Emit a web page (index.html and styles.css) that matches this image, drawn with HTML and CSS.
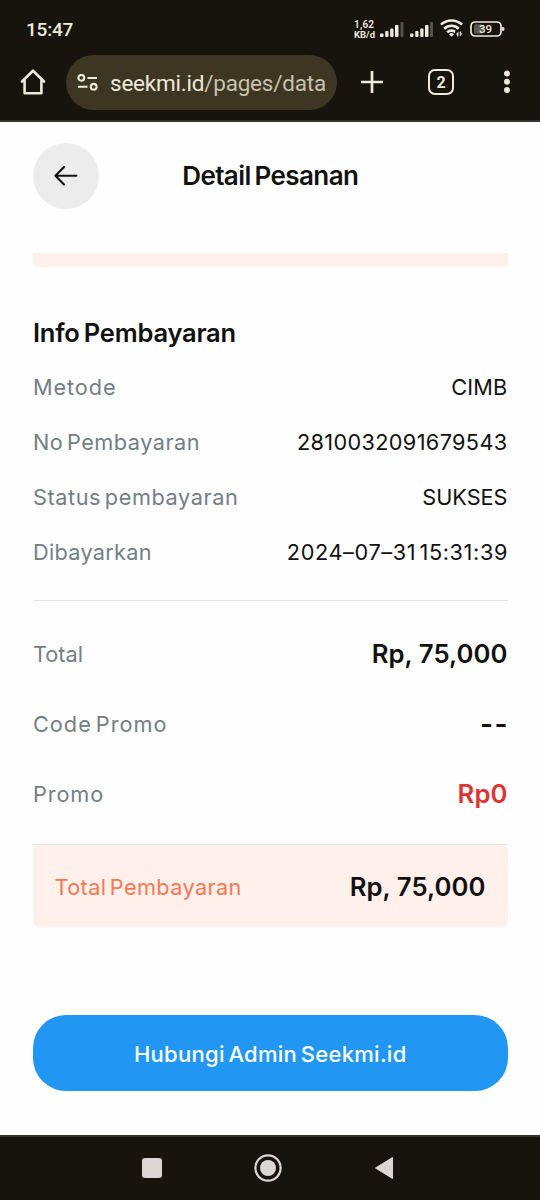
FILE: index.html
```html
<!DOCTYPE html>
<html lang="id">
<head>
<meta charset="utf-8">
<title>Detail Pesanan</title>
<link rel="stylesheet" href="styles.css">
</head>
<body>
<div class="screen">
  <header class="chrome">
    <div class="status">
      <span class="clock">15:47</span>
      <div class="indicators">
        <span class="speed"><span class="speed-line speed-num">1,62</span><span class="speed-line">KB/d</span></span>
        <svg class="signals" width="54" height="18" viewBox="0 0 54 18">
          <g fill="#efebe0">
            <rect x="0" y="11.5" width="3.5" height="3.5" rx="1"/><rect x="5.2" y="9" width="3.3" height="6" rx="1"/><rect x="10.2" y="6.5" width="3.3" height="8.5" rx="1"/><rect x="15" y="3" width="3.5" height="12" rx="1"/>
            <rect x="30" y="11.5" width="3.5" height="3.5" rx="1"/><rect x="35.2" y="9" width="3.3" height="6" rx="1"/><rect x="40.2" y="6.5" width="3.3" height="8.5" rx="1"/><rect x="45" y="3" width="3.5" height="12" rx="1"/>
          </g>
          <g fill="#565248"><rect x="20.5" y="0" width="3" height="15" rx="1"/><rect x="50" y="0" width="3" height="15" rx="1"/></g>
        </svg>
        <svg class="wifi" width="24" height="19" viewBox="0 0 24 19">
          <g fill="none" stroke="#efebe0" stroke-width="2.6">
            <path d="M.9 6.6a15.6 15.6 0 0 1 21.2 0"/><path d="M4.2 10.7a10.6 10.6 0 0 1 14.6 0"/><path d="M7.2 14.4a6.2 6.2 0 0 1 8.6 0"/>
          </g>
          <path d="M9 16.2a3.6 3.6 0 0 1 5 0l-2.5 2.6z" fill="#efebe0"/>
          <path d="M15.2 13h7.8v6h-7.8z" fill="#17130d"/>
          <path d="M18.4 13.4v5.2h-1.3v-2.2h-1.3zM19.8 18.6v-5.2h1.3v2.2h1.3z" fill="#efebe0"/>
        </svg>
        <svg class="battery" width="35" height="16" viewBox="0 0 35 16">
          <rect x="4" y="3.3" width="9" height="9.4" rx="1.5" fill="#5c584d"/>
          <rect x="1" y="1" width="30" height="14" rx="4" fill="none" stroke="#efebe0" stroke-width="1.7"/>
          <path d="M32.2 6h1q1.3 0 1.3 2t-1.3 2h-1z" fill="#efebe0"/>
          <text x="15.6" y="12.1" text-anchor="middle" class="battery-text">39</text>
        </svg>
      </div>
    </div>
    <div class="toolbar">
      <svg class="home" width="28" height="28" viewBox="0 0 28 28" fill="none" stroke="#efe9db" stroke-width="2.6" stroke-linejoin="round" stroke-linecap="round">
        <path d="M3 13.5 14 2.7 25 13.5M5.6 12.5v12.8h16.8V12.5"/>
      </svg>
      <div class="address">
        <svg width="22" height="18" viewBox="0 0 22 18" fill="none" stroke="#efe9db" stroke-width="2.1">
          <circle cx="4.3" cy="3.8" r="2.9"/><path d="M10.5 4H20M1 12.8H10.5"/><circle cx="16.7" cy="12.8" r="2.9"/>
        </svg>
        <span class="url">seekmi.id<span class="url-path">/pages/data</span></span>
      </div>
      <svg class="plus" width="24" height="24" viewBox="0 0 24 24" stroke="#efe9db" stroke-width="2.7"><path d="M12 1v22M1 12h22"/></svg>
      <span class="tabs">2</span>
      <svg class="more" width="8" height="24" viewBox="0 0 8 24" fill="#efe9db"><circle cx="4" cy="3.6" r="3"/><circle cx="4" cy="11.8" r="3"/><circle cx="4" cy="20.1" r="3"/></svg>
    </div>
  </header>

  <main class="page">
    <div class="titlebar">
      <span class="back">
        <svg width="24" height="22" viewBox="0 0 24 22" fill="none" stroke="#111" stroke-width="2.1" stroke-linecap="round" stroke-linejoin="round"><path d="M10 2 1.4 10.7 10 19.4M1.4 10.7H22.4"/></svg>
      </span>
      <h1 class="title">Detail Pesanan</h1>
    </div>
    <div class="strip"></div>
    <h2 class="heading">Info Pembayaran</h2>
    <div class="row"><span class="label l-metode">Metode</span><span class="value v-cimb">CIMB</span></div>
    <div class="row"><span class="label l-no">No Pembayaran</span><span class="value v-no">2810032091679543</span></div>
    <div class="row"><span class="label l-status">Status pembayaran</span><span class="value">SUKSES</span></div>
    <div class="row"><span class="label l-paid">Dibayarkan</span><span class="value v-paid">2024–07–31 15:31:39</span></div>
    <div class="totals">
      <div class="row tall"><span class="label">Total</span><span class="amount">Rp, 75,000</span></div>
      <div class="row tall"><span class="label l-code">Code Promo</span><span class="amount dashes">--</span></div>
      <div class="row tall"><span class="label l-promo">Promo</span><span class="amount red">Rp0</span></div>
    </div>
    <div class="grand"><span class="label orange">Total Pembayaran</span><span class="amount">Rp, 75,000</span></div>
    <div class="contact">Hubungi Admin Seekmi.id</div>
  </main>

  <nav class="nav">
    <svg width="20" height="20" viewBox="0 0 20 20"><rect width="20" height="20" rx="3" fill="#dcd7d5"/></svg>
    <svg width="28" height="28" viewBox="0 0 28 28"><circle cx="14" cy="14" r="12.6" fill="none" stroke="#dcd7d5" stroke-width="2.2"/><circle cx="14" cy="14" r="8" fill="#dcd7d5"/></svg>
    <svg width="20" height="24" viewBox="0 0 20 24"><path d="M1.5 12 18.5 1.5v21z" fill="#dcd7d5" stroke="#dcd7d5" stroke-linejoin="round"/></svg>
  </nav>
</div>
</body>
</html>
```
FILE: styles.css
```css
* { box-sizing: border-box; }
body { margin: 0; background: #fefefe; font-family: Inter, "Noto Sans", sans-serif; color: #111; }
svg { display: block; flex: none; }
.screen { display: flex; flex-direction: column; width: 540px; height: 1200px; overflow: hidden; }

.chrome { height: 122px; background: #17130d; border-bottom: 2px solid #35332b; font-family: Roboto, sans-serif; color: #efe9db; }
.status { display: flex; justify-content: space-between; height: 55px; padding: 0 35px 0 26px; }
.clock { padding-top: 18px; font-size: 19px; line-height: 24px; font-weight: 500; letter-spacing: -0.2px; }
.indicators { display: flex; align-items: flex-start; }
.speed { width: 26px; padding-top: 20px; font-size: 9.5px; line-height: 9.5px; font-weight: 700; }
.speed-line { display: block; white-space: nowrap; }
.speed-num { font-size: 10px; font-weight: 600; letter-spacing: 0.2px; }
.signals { margin-top: 22px; }
.wifi { margin: 18px 0 0 6px; }
.battery { margin: 21px 0 0 6px; }
.battery-text { font: 500 11.5px Roboto, sans-serif; fill: #efebe0; }

.toolbar { display: flex; align-items: center; height: 54px; padding-left: 19px; }
.address { display: flex; align-items: center; gap: 11px; width: 271px; height: 55px; margin-left: 19px; padding: 1px 0 0 11px; border-radius: 28px; background: #3c3622; }
.url { font-size: 22.5px; white-space: nowrap; letter-spacing: -0.22px; }
.url-path { color: #c8c2ae; }
.plus { margin-left: 23px; }
.tabs { display: flex; align-items: center; justify-content: center; width: 26px; height: 26px; margin-left: 44px; border: 2.5px solid #efe9db; border-radius: 7px; font-size: 16px; font-weight: 700; }
.more { margin-left: 49px; }

.page { flex: 1; padding: 20px 32.5px 0 33px; }
.titlebar { display: grid; grid-template-columns: 66px 1fr 66px; align-items: center; height: 67px; }
.back { display: flex; align-items: center; justify-content: center; width: 66px; height: 66px; border-radius: 50%; background: #ececec; }
.title { margin: 0; text-align: center; font-size: 26px; line-height: 32px; font-weight: 600; letter-spacing: -0.6px; word-spacing: -2px; white-space: nowrap; }
.strip { height: 14px; margin-top: 44px; border-radius: 0 0 6px 6px; background: #fff0ec; }
.heading { margin: 50px 0 10px; font-size: 25.5px; line-height: 32px; font-weight: 600; letter-spacing: -0.22px; word-spacing: -2px; }
.row { display: flex; align-items: center; justify-content: space-between; height: 55px; white-space: nowrap; }
.label { font-size: 21.7px; color: #737e85; word-spacing: -3px; }
.value { font-size: 21.7px; }
.l-metode { letter-spacing: 0.9px; }
.l-no { letter-spacing: 0.5px; }
.l-status { letter-spacing: 0.58px; }
.l-paid { letter-spacing: 0.3px; }
.l-code { letter-spacing: 1px; }
.l-promo { letter-spacing: 0.9px; }
.v-cimb { letter-spacing: 0.2px; }
.v-no { letter-spacing: 0.35px; }
.v-paid { letter-spacing: 0.62px; word-spacing: -3.5px; margin-right: -0.5px; }
.totals { margin-top: 21px; padding-top: 18px; border-top: 1px solid #e3e4e5; border-bottom: 1px solid #e0dfe3; height: 245px; }
.tall { height: 70px; }
.amount { font-size: 25.7px; font-weight: 600; letter-spacing: 0.05px; }
.tall .amount { margin-bottom: 2px; }
.tall .label { margin-bottom: 1px; }
.tall .dashes { margin: 0 -1.5px 0 0; font-size: 28px; letter-spacing: 1.5px; }
.red { color: #dd3535; }
.grand { display: flex; align-items: center; justify-content: space-between; height: 81.5px; padding: 2px 22px 0; border-radius: 6px; background: #fff0ec; white-space: nowrap; }
.orange { color: #fa7850; letter-spacing: 0.38px; margin-left: -0.5px; }
.contact { display: flex; align-items: center; justify-content: center; height: 76.5px; margin-top: 88px; border-radius: 33px; background: #2196f3; color: #fff; font-size: 22px; font-weight: 500; white-space: nowrap; padding-top: 3px; letter-spacing: 0.28px; word-spacing: -2.5px; }

.nav { display: flex; align-items: center; height: 65px; padding: 0 0 2px 142px; border-top: 2px solid #33322b; background: #17130d; }
.nav svg + svg { margin-left: 92px; }
```
